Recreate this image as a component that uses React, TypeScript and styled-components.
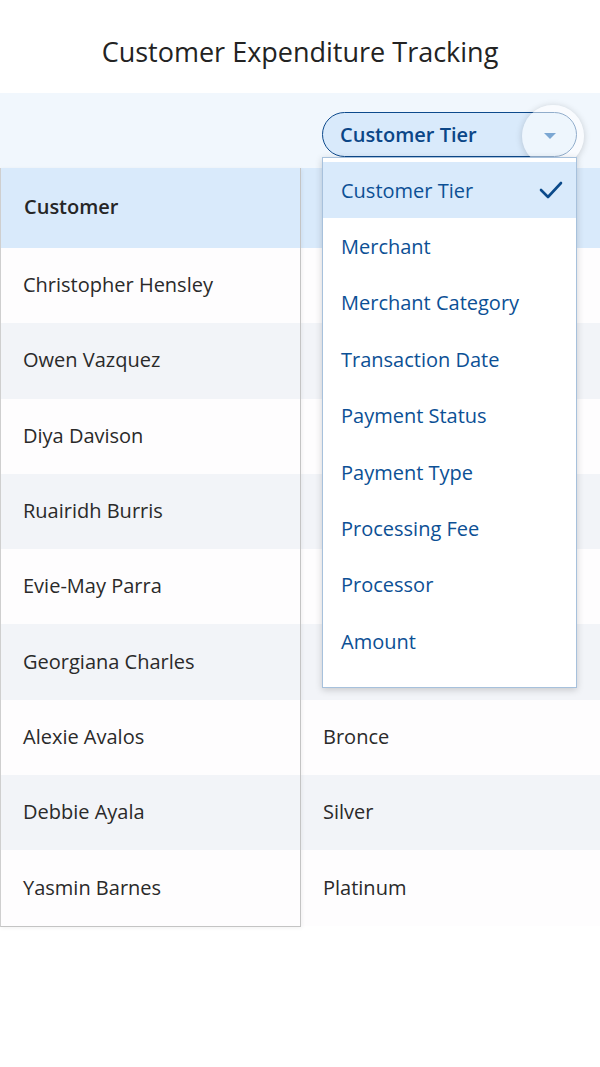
import React from "react";
import styled, { createGlobalStyle } from "styled-components";

const GlobalStyle = createGlobalStyle`
  html, body { margin: 0; padding: 0; background: #ffffff; }
  body { font-family: "Open Sans", "Noto Sans", sans-serif; }
  * { box-sizing: border-box; }
`;

const Page = styled.div`
  width: 600px;
  height: 1067px;
  background: #ffffff;
  overflow: hidden;
`;

const Title = styled.h1`
  margin: 0;
  height: 93px;
  display: flex;
  align-items: center;
  justify-content: center;
  font-size: 27px;
  font-weight: 500;
  color: #232323;
  padding-top: 10px;
`;

const Toolbar = styled.div`
  height: 75px;
  background: #f1f7fd;
  display: flex;
  justify-content: flex-end;
  align-items: flex-start;
  padding: 19px 23px 0 0;
`;

const SelectWrap = styled.div`
  position: relative;
  width: 255px;
  z-index: 5;
`;

const SelectBox = styled.div`
  height: 45px;
  border: 1.5px solid #0d4a8c;
  border-radius: 23px;
  background: #d9eafb;
  display: flex;
  align-items: center;
  padding-left: 17px;
  font-size: 20px;
  font-weight: 600;
  color: #0b4687;
`;

const FocusRing = styled.div`
  position: absolute;
  right: -7px;
  top: 50%;
  width: 62px;
  height: 62px;
  margin-top: -30px;
  border-radius: 50%;
  background: rgba(255, 255, 255, 0.55);
  box-shadow: 0 1px 7px rgba(0, 0, 0, 0.18);
  display: flex;
  align-items: center;
  justify-content: center;
`;

const Menu = styled.ul`
  position: absolute;
  top: 45px;
  left: 0;
  width: 255px;
  margin: 0;
  padding: 4px 0 17px;
  list-style: none;
  background: #ffffff;
  border: 1px solid #a7c1dc;
  box-shadow: 0 2px 7px rgba(0, 0, 0, 0.18);
`;

const MenuItem = styled.li<{ $selected?: boolean }>`
  height: 56.4px;
  display: flex;
  align-items: center;
  justify-content: space-between;
  padding: 0 12px 0 18px;
  font-size: 20px;
  color: #0c5095;
  background: ${(p) => (p.$selected ? "#d9eafb" : "transparent")};
`;

const Table = styled.div`
  display: grid;
  grid-template-columns: 301px 1fr;
`;

const PinnedColumn = styled.div`
  border-left: 1px solid #cfcfcf;
  border-right: 1px solid #c4c4c4;
  border-bottom: 1px solid #c4c4c4;
  box-shadow: 1px 1px 4px rgba(0, 0, 0, 0.06);
  position: relative;
  z-index: 1;
`;

const Column = styled.div``;

const HeaderCell = styled.div`
  height: 80px;
  background: #d9eafb;
  display: flex;
  align-items: center;
  padding: 0 0 3px 23px;
  font-size: 20px;
  font-weight: 600;
  color: #262626;
`;

const Cell = styled.div<{ $alt?: boolean }>`
  height: 75.3px;
  display: flex;
  align-items: center;
  padding: 0 0 2px 22px;
  font-size: 20px;
  color: #2a2a2a;
  background: ${(p) => (p.$alt ? "#f2f4f8" : "#fefdfe")};
`;

// Tier values for the first rows sit under the open menu in the reference and are not shown.
const rows = [
  ["Christopher Hensley", ""],
  ["Owen Vazquez", ""],
  ["Diya Davison", ""],
  ["Ruairidh Burris", ""],
  ["Evie-May Parra", ""],
  ["Georgiana Charles", ""],
  ["Alexie Avalos", "Bronce"],
  ["Debbie Ayala", "Silver"],
  ["Yasmin Barnes", "Platinum"],
];

const options = [
  "Customer Tier",
  "Merchant",
  "Merchant Category",
  "Transaction Date",
  "Payment Status",
  "Payment Type",
  "Processing Fee",
  "Processor",
  "Amount",
];

const CaretIcon = () => (
  <svg width="14" height="8" viewBox="0 0 14 8" style={{ marginLeft: -6 }}>
    <path d="M1 1 L13 1 L7 7 Z" fill="#7ba7d3" />
  </svg>
);

const CheckIcon = () => (
  <svg width="26" height="20" viewBox="0 0 26 20">
    <path d="M3 10 L10 17 L23 3" fill="none" stroke="#0b4a8a" strokeWidth="2.6" strokeLinecap="round" strokeLinejoin="round" />
  </svg>
);

export default function App() {
  return (
    <Page>
      <GlobalStyle />
      <Title>Customer Expenditure Tracking</Title>
      <Toolbar>
        <SelectWrap>
          <SelectBox>Customer Tier</SelectBox>
          <FocusRing>
            <CaretIcon />
          </FocusRing>
          <Menu>
            {options.map((o, i) => (
              <MenuItem key={o} $selected={i === 0}>
                {o}
                {i === 0 && <CheckIcon />}
              </MenuItem>
            ))}
          </Menu>
        </SelectWrap>
      </Toolbar>
      <Table>
        <PinnedColumn>
          <HeaderCell>Customer</HeaderCell>
          {rows.map((r, i) => (
            <Cell key={r[0]} $alt={i % 2 === 1}>
              {r[0]}
            </Cell>
          ))}
        </PinnedColumn>
        <Column>
          <HeaderCell />
          {rows.map((r, i) => (
            <Cell key={r[0]} $alt={i % 2 === 1}>
              {r[1]}
            </Cell>
          ))}
        </Column>
      </Table>
    </Page>
  );
}
